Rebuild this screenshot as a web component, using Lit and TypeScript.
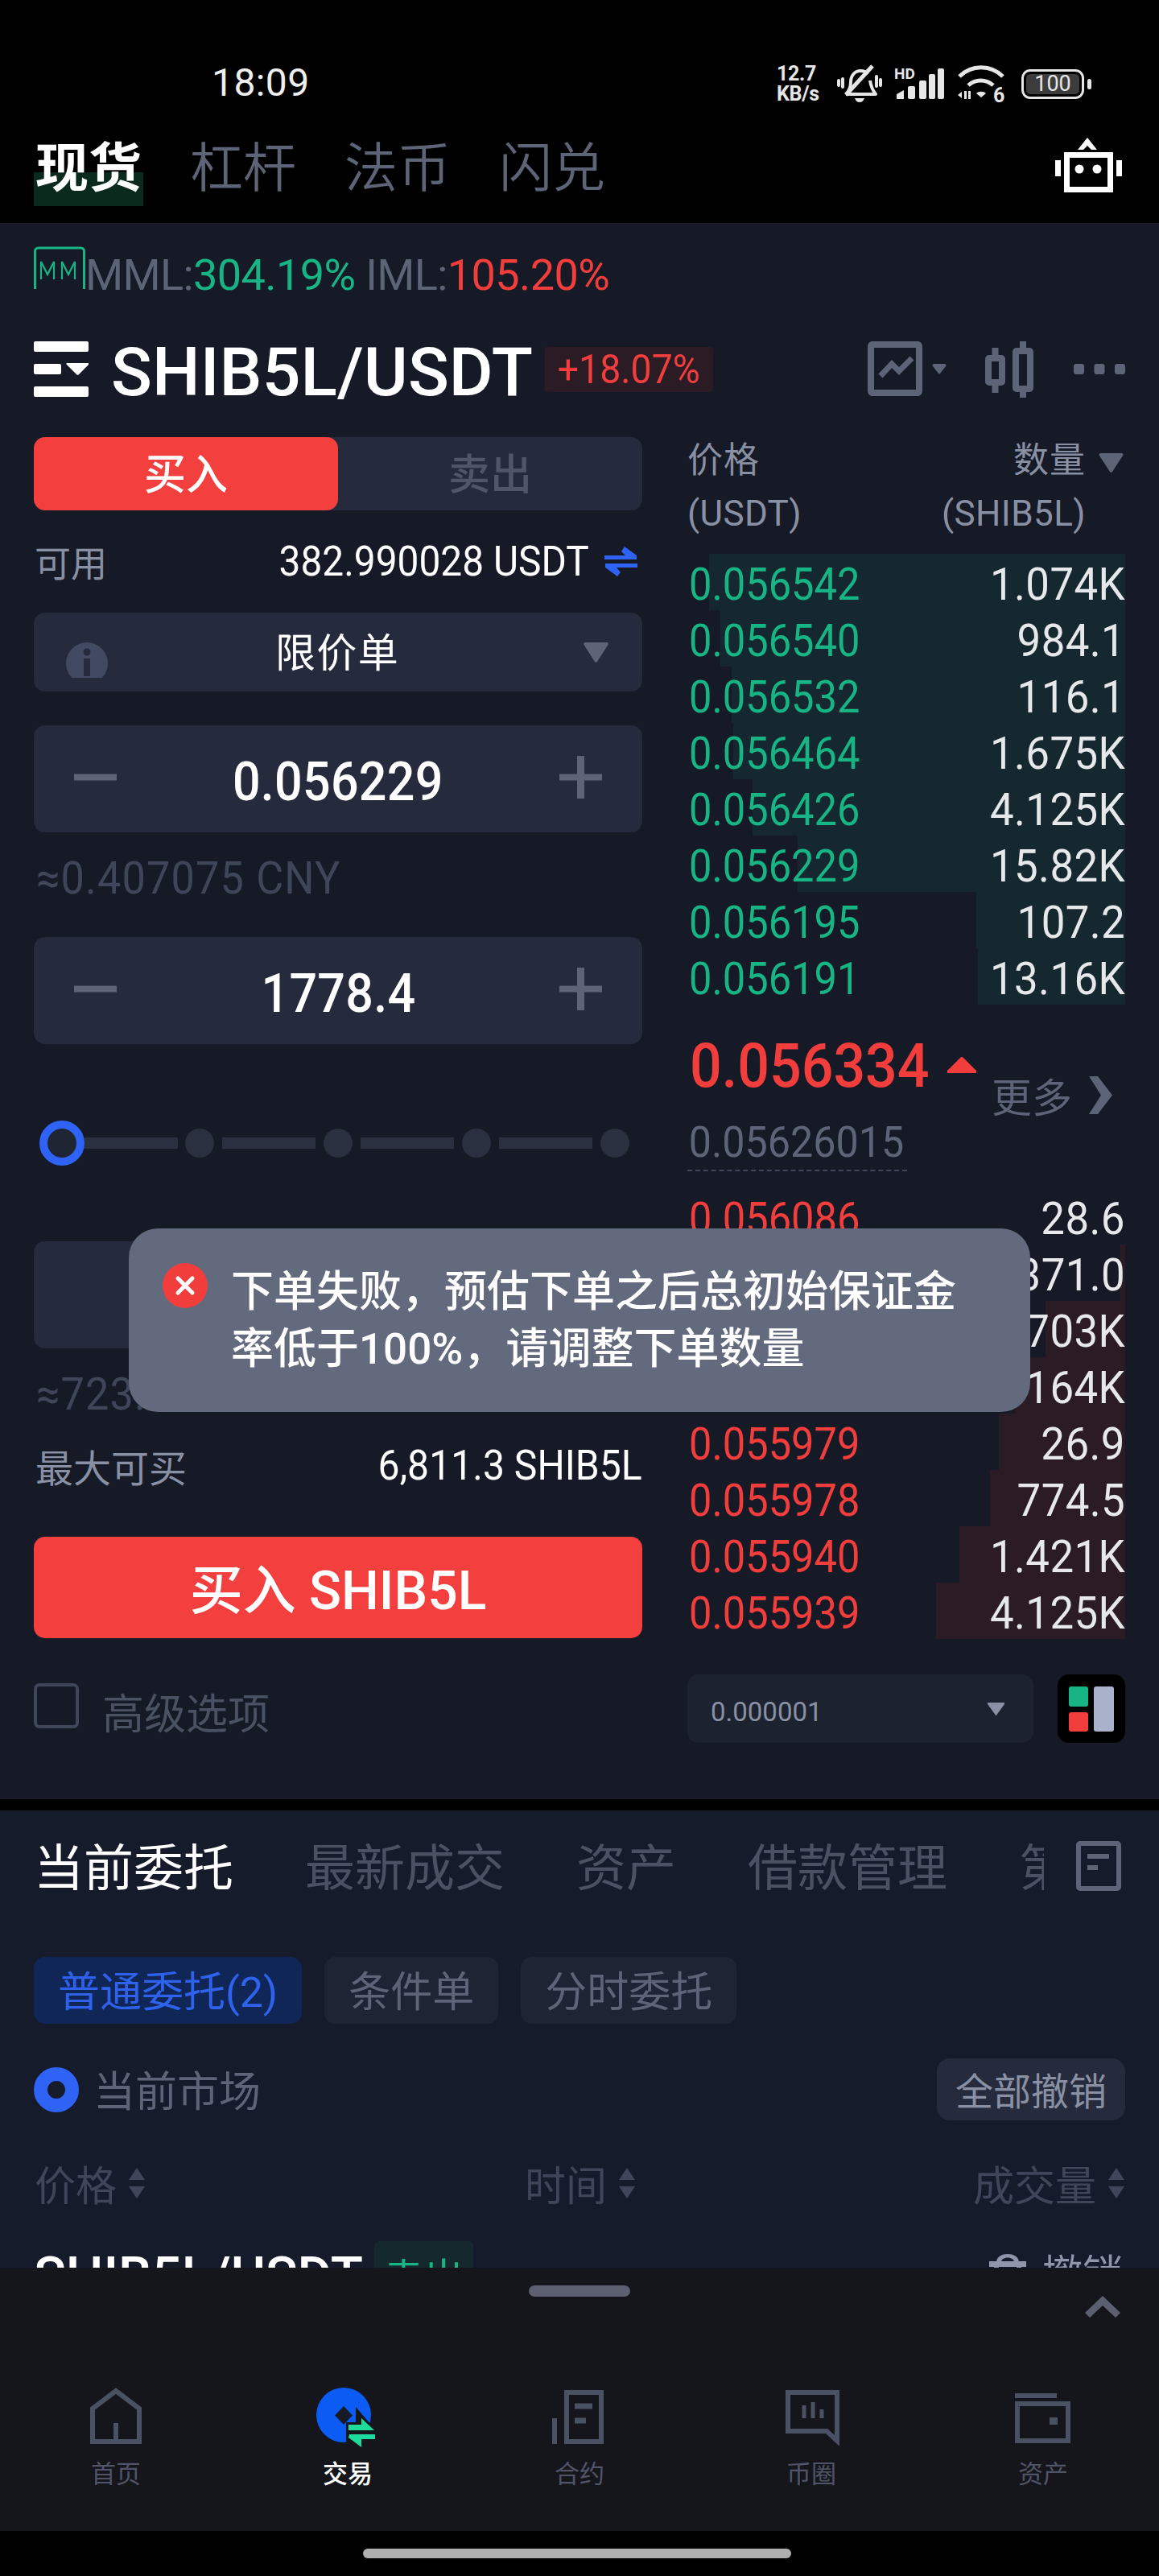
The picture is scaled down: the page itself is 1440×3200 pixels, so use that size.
import { LitElement, html, css, svg } from "lit";
import { customElement } from "lit/decorators.js";

const asks = [
  ["0.056542", "1.074K", 881], ["0.056540", "984.1", 895], ["0.056532", "116.1", 909], ["0.056464", "1.675K", 911],
  ["0.056426", "4.125K", 935], ["0.056229", "15.82K", 991], ["0.056195", "107.2", 1213], ["0.056191", "13.16K", 1215],
] as const;
const bids = [
  ["0.056086", "28.6", 1398], ["0.056071", "371.0", 1392], ["0.056033", "1.703K", 1299], ["0.056006", "1.164K", 1262],
  ["0.055979", "26.9", 1241], ["0.055978", "774.5", 1230], ["0.055940", "1.421K", 1192], ["0.055939", "4.125K", 1163],
] as const;

const X0 = 856, X1 = 1398;
const bar = (left: number) => `width:${((X1 - left) / (X1 - X0)) * 100}%`;

const sort = svg`<svg class="sort" viewBox="0 0 22 38" width="22" height="38"><path d="M11 0 L21 15 H1Z M11 38 L21 23 H1Z" fill="#3f4659"/></svg>`;
const minus = html`<svg width="53" height="53" viewBox="0 0 53 53"><rect y="22.500" width="53" height="8" fill="#5d6477"/></svg>`;
const plus = html`<svg width="53" height="53" viewBox="0 0 53 53"><path d="M0 22.500h22V0h9v22.500h22v8H31V53h-9V30.500H0z" fill="#5d6477"/></svg>`;

@customElement("app-root")
export class AppRoot extends LitElement {
  static styles = css`
    :host { display: block; width: 1440px; height: 3200px; position: relative; overflow: hidden; background: #000;
      font-family: Roboto, "Noto Sans CJK SC", sans-serif; color: #fff; }
    svg { display: block; flex: none; }
    .top { height: 277px; background: #000; }
    .status { height: 152px; display: flex; align-items: center; padding: 56px 0 0 263px; box-sizing: border-box; position: relative; }
    .time { font-size: 48px; width: 702px; margin-top: -4px; color: #eee; letter-spacing: 0.4px; }
    .cluster { display: flex; align-items: center; }
    .speed { width: 60px; font-size: 25px; line-height: 25px; font-weight: 700; margin-right: 15px; color: #e6e6e6; letter-spacing: -0.3px; }
    .batt { margin-left: 18px; width: 87px; display: flex; align-items: center; gap: 4px; }
    .batt .shell { width: 78px; height: 37px; box-sizing: border-box; border: 3.5px solid #e6e6e6; border-radius: 11px; padding: 3px; }
    .batt .fill { background: #3c3c3c; border-radius: 5px; height: 100%; font-size: 27px; line-height: 24px; text-align: center; color: #e6e6e6; }
    .batt .nub { width: 5px; height: 13px; border-radius: 3px; background: #e6e6e6; }
    .tabs { display: flex; align-items: center; height: 104px; padding: 0 0 0 44px; gap: 60px; margin-top: 6px; }
    .tab { font-size: 66px; line-height: 88px; color: #5d6477; position: relative; font-weight: 350; }
    .tab.on { color: #fff; font-weight: 700; z-index: 0; }
    .tab.on::before { content: ""; position: absolute; z-index: -1; left: -2px; right: -2px; top: 48px; height: 42px; background: #0a2a1d; }
    .robot { position: absolute; left: 1306px; top: 166px; }

    .main { height: 1958px; background: #161a26; }
    .margin { height: 128px; padding-left: 42px; display: flex; align-items: center; font-size: 54px; letter-spacing: -0.6px; color: #5d6477; white-space: pre; }
    .margin svg { margin-top: -16px; }
    .g { color: #17b585; } .r { color: #f23d3d; }
    .pair { height: 70px; padding: 19px 42px 49px; display: flex; align-items: center; }
    .pair .name { font-size: 84px; font-weight: 500; margin: 8px 15px 0 28px; letter-spacing: 0.1px; line-height: 70px; }
    .chg { background: #2a1b25; color: #f23d3d; height: 56px; width: 209px; display: flex; align-items: center; justify-content: center; font-size: 50px; border-radius: 4px; }
    .chg span { transform: scaleX(.93); }
    .tools { margin-left: auto; display: flex; align-items: center; }
    .cols { display: grid; grid-template-columns: 756px 542px; column-gap: 58px; padding: 0 42px; }

    .seg { display: flex; height: 91px; background: #252b3d; border-radius: 14px; font-size: 52px; }
    .seg div { flex: 1; display: flex; align-items: center; justify-content: center; color: #4f566a; font-weight: 500; padding-bottom: 6px; box-sizing: border-box; }
    .seg div:first-child { flex: none; width: 378px; background: #f43f3f; border-radius: 14px; color: #fff; }
    .avail { height: 127px; display: flex; align-items: center; justify-content: space-between; font-size: 45px; color: #8a90a3; padding: 0 6px 0 1px; }
    .avail .v { display: flex; align-items: center; gap: 19px; color: #fff; font-size: 52px; }
    .avail .v span { transform: scaleX(.92); transform-origin: right center; }
    .box { background: #252b3d; border-radius: 14px; display: flex; align-items: center; justify-content: space-between; box-sizing: border-box; }
    .otype { height: 98px; padding: 0 42px 0 40px; font-size: 50px; display: grid; grid-template-columns: 1fr auto 1fr; }
    .otype span { letter-spacing: 1.4px; margin-top: -6px; }
    .otype svg:last-child { justify-self: end; }
    .num { height: 133px; padding: 0 50px; font-size: 67px; font-weight: 500; letter-spacing: 0.3px; }
    .num span { margin-top: 6px; transform: scaleX(.91); }
    .num svg { margin-top: -4px; }
    .cny { height: 130px; padding: 0 0 16px 3px; box-sizing: border-box; display: flex; align-items: center; font-size: 55px; color: #3f4659; letter-spacing: 1.200px; }
    .cny span, .note span { transform: scaleX(.95); transform-origin: left center; white-space: nowrap; }
    .mt42 { margin-top: 42px; }
    .slider { margin: 95px 17px 94px 7px; height: 56px; display: flex; align-items: center; }
    .ring { width: 56px; height: 56px; box-sizing: border-box; border: 10px solid #2e63f5; background: #1f2533; border-radius: 50%; flex: none; }
    .dot { width: 36px; height: 36px; background: #2b3040; border-radius: 50%; flex: none; }
    .line { width: 116px; flex: none; height: 14px; background: #2b3040; margin: 0 10px; }
    .line.first { margin: 0 9px 0 0; }
    .amt { height: 133px; }
    .note { height: 114px; display: flex; align-items: center; font-size: 55px; color: #3f4659; padding-left: 3px; letter-spacing: 1.200px; }
    .max { height: 66px; display: flex; align-items: center; justify-content: space-between; font-size: 47px; color: #8a90a3; padding-left: 2px; margin-top: -2px; margin-bottom: 2px; }
    .max b { font-weight: 400; color: #fff; font-size: 52px; transform: scaleX(.925); transform-origin: right center; white-space: nowrap; }
    .buy { margin-top: 56px; height: 126px; border-radius: 14px; background: #f43f3f; display: flex; align-items: center; justify-content: center; font-size: 66px; font-weight: 500; padding-bottom: 4px; box-sizing: border-box; }
    .adv { margin-top: 56px; display: flex; font-size: 52px; color: #4a5163; }
    .chk { width: 56px; height: 56px; box-sizing: border-box; border: 4px solid #3f4659; border-radius: 7px; margin-right: 29px; }
    .adv span { margin-top: 10px; line-height: 60px; }

    .hd { display: flex; justify-content: space-between; font-size: 44px; color: #8a90a3; padding-right: 49px; margin-bottom: 13px; margin-left: -2px; position: relative; }
    .hd .a { height: 58px; line-height: 58px; letter-spacing: 1px; } .hd .b { height: 74px; line-height: 74px; letter-spacing: 0.4px; }
    .hd .r2 { text-align: right; }
    .hd svg { position: absolute; right: 2px; top: 20px; }
    .row { height: 70px; display: flex; justify-content: space-between; align-items: center; font-size: 55px; position: relative; color: #e6e8ec; z-index: 0; box-sizing: border-box; padding-top: 5px; }
    .row span { display: block; white-space: nowrap; }
    .row .p { transform: scaleX(.92); transform-origin: left center; }
    .row .q { transform: scaleX(.96); transform-origin: right center; letter-spacing: 0.4px; }
    .row i { position: absolute; right: 0; top: 0; bottom: 0; z-index: -1; }
    .asks .p { color: #17b585; } .asks i { background: #16282f; }
    .bids .p { color: #f23d3d; } .bids i { background: #2b1b25; }
    .last { height: 206px; display: flex; justify-content: space-between; margin-bottom: 22px; }
    .lp { height: 148px; box-sizing: border-box; padding: 4px 0 0 1px; display: flex; align-items: center; font-size: 76px; font-weight: 500; color: #f23d3d; }
    .lp span { transform: scaleX(.92); transform-origin: left center; }
    .lp svg { margin-top: -2px; margin-left: -3px; }
    .mp { width: 273px; font-size: 54px; color: #5d6477; height: 46px; line-height: 46px; padding-bottom: 11px; border-bottom: 2px dashed #3f4659; margin-left: -2px; white-space: nowrap; }
    .mp span { display: block; padding-left: 2px; transform: scaleX(.93); transform-origin: left center; }
    .more { padding-top: 82px; height: 60px; display: flex; align-items: center; gap: 21px; font-size: 50px; color: #5d6477; padding-right: 16px; flex: none; white-space: nowrap; }
    .tb { margin: 44px 0 0 -2px; display: flex; gap: 30px; height: 85px; }
    .dd { width: 430px; background: #1d2230; border-radius: 14px; display: flex; align-items: center; justify-content: space-between; padding: 0 36px 0 29px; box-sizing: border-box; color: #8a90a3; font-size: 33px; }
    .dd span { margin-top: 8px; }
    .lay { width: 84px; height: 85px; background: #000; border-radius: 14px; display: flex; align-items: center; justify-content: center; }

    .sep { height: 14px; background: #000; }
    .orders { height: 568px; background: #161b2b; overflow: hidden; }
    .otabs { height: 138px; display: flex; align-items: center; padding-left: 42px; }
    .otrack { width: 1255px; display: flex; gap: 89px; overflow: hidden; white-space: nowrap; font-size: 62px; color: #4a5163; flex: none; margin-top: -4px; }
    .otrack .on { color: #fff; }
    .otabs svg { margin-left: 40px; }
    .sub { margin-top: 44px; display: flex; gap: 28px; padding-left: 42px; }
    .sub div { height: 83px; padding: 0 30px 4px; box-sizing: border-box; background: #1e2433; border-radius: 14px; display: flex; align-items: center; font-size: 52px; color: #5d6477; }
    .sub div.on { background: #0f2657; color: #2f62ec; }
    .flt { margin-top: 43px; height: 77px; display: flex; align-items: center; padding: 0 42px; font-size: 52px; color: #5d6477; }
    .radio { width: 56px; height: 56px; box-sizing: border-box; border: 17px solid #2e63f5; border-radius: 50%; margin-right: 18px; }
    .flt > span { margin-top: -2px; }
    .cancel { margin-left: auto; height: 77px; width: 234px; background: #252b3d; border-radius: 16px; color: #8a90a3; font-size: 47px; display: flex; align-items: center; justify-content: center; padding-bottom: 2px; box-sizing: border-box; }
    .ohead { margin-top: 41px; height: 60px; padding: 0 42px 0 43px; display: grid; grid-template-columns: 609px 1fr auto; font-size: 51px; color: #3f4659; }
    .ohead div { display: flex; align-items: center; gap: 14px; }
    .orow { margin-top: 49px; height: 84px; display: flex; align-items: center; padding: 0 45px 0 42px; }
    .orow .t { font-size: 66px; font-weight: 500; letter-spacing: -0.2px; margin-top: 4px; }
    .orow .tag { margin-left: 14px; width: 123px; height: 84px; background: #15282e; color: #17b585; border-radius: 6px; font-size: 50px; display: flex; align-items: center; justify-content: center; }
    .orow .c { margin-left: auto; margin-top: -10px; display: flex; align-items: center; gap: 20px; font-size: 50px; color: #8f95aa; }
    .orow .c svg { margin-top: 6px; }

    .sheet { height: 327px; background: #15161c; position: relative; }
    .grab { width: 126px; height: 14px; border-radius: 7px; background: #5d6070; margin: 0 auto; position: relative; top: 22px; }
    .chev { height: 129px; display: flex; justify-content: flex-end; padding: 21px 48px 0 0; box-sizing: border-box; }
    .nav { display: grid; grid-template-columns: repeat(5, 288px); }
    .nav div { display: flex; flex-direction: column; align-items: center; font-size: 31px; color: #4f5566; }
    .nav div.on { color: #fff; font-weight: 500; }
    .nav span { margin-top: 14px; line-height: 40px; }
    .gest { height: 56px; background: #000; padding-top: 22px; box-sizing: border-box; }
    .gest div { width: 532px; height: 12px; border-radius: 6px; background: #b0b0b0; margin-left: 451px; }

    .toast { position: absolute; left: 160px; top: 1526px; width: 1120px; height: 228px; background: #636a7e; border-radius: 36px; box-sizing: border-box; padding: 44px 70px 0 127px; font-size: 53px; line-height: 71px; font-weight: 500; }
    .toast svg { position: absolute; left: 42px; top: 43px; }
  `;

  render() {
    const row = (r: readonly [string, string, number]) =>
      html`<div class="row"><i style=${bar(r[2])}></i><span class="p">${r[0]}</span><span class="q">${r[1]}</span></div>`;
    return html`
      <div class="top">
        <div class="status">
          <div class="time">18:09</div>
          <div class="cluster">
            <div class="speed">12.7<br />KB/s</div>
            <svg width="56" height="48" viewBox="0 0 56 48" fill="none" stroke="#e6e6e6" stroke-width="4">
              <path d="M11 37c4-4 6-8 6-15 0-8 5-14 12-14 4 0 7 1 9 4M41 20c1 7 3 12 7 17H11" stroke-linejoin="round"/>
              <path d="M44 2 11 38" stroke-width="5"/>
              <path d="M7 18v10M2 20v6M49 15v12M54 19v7" stroke-linecap="round"/>
              <path d="M22 42h12c-1 3-3 5-6 5s-5-2-6-5z" fill="#e6e6e6" stroke="none"/>
            </svg>
            <svg style="margin-left:15px" width="63" height="42" viewBox="0 0 63 42">
              <text x="0" y="15" font-family="Roboto" font-weight="700" font-size="19" fill="#e6e6e6">HD</text>
              <g fill="#e6e6e6"><path d="M3 34l9-5v11H3z"/><rect x="17" y="24" width="9" height="16" rx="2"/><rect x="31" y="17" width="9" height="23" rx="2"/><rect x="43" y="9" width="8" height="31" rx="2"/><rect x="54" y="2" width="8" height="38" rx="2"/></g>
            </svg>
            <svg style="margin-left:15px" width="62" height="48" viewBox="0 0 62 48" fill="none" stroke="#e6e6e6" stroke-width="5">
              <path d="M3 15C18 0 42 0 57 15"/><path d="M14 26c9-8 22-8 31 0"/>
              <path d="M24 36c3-3 9-3 12 0l-6 5z" fill="#e6e6e6" stroke="none"/>
              <path d="M1 38l5-4v8zM9 33h3v10H9zM14 33h3v10h-3z" fill="#e6e6e6" stroke="none"/>
              <text x="45" y="47" font-family="Roboto" font-weight="700" font-size="25" fill="#e6e6e6" stroke="none">6</text>
            </svg>
            <div class="batt"><div class="shell"><div class="fill">100</div></div><div class="nub"></div></div>
          </div>
        </div>
        <div class="tabs">
          <div class="tab on">现货</div><div class="tab">杠杆</div><div class="tab">法币</div><div class="tab">闪兑</div>
        </div>
        <svg class="robot" width="90" height="76" viewBox="0 0 90 76" fill="#fff">
          <path d="M33 20 45 5l12 15H50l-5-5-5 5z"/>
          <rect x="19.500" y="26.500" width="54" height="43" fill="none" stroke="#fff" stroke-width="7"/>
          <circle cx="35" cy="44" r="5.500"/><circle cx="57" cy="44" r="5.500"/>
          <rect x="5" y="33" width="7" height="20"/><rect x="81" y="33" width="7" height="20"/>
        </svg>
      </div>

      <div class="main">
        <div class="margin">
          <svg width="64" height="54" viewBox="0 0 64 54" fill="none" stroke="#17b585">
            <path d="M1.500 53V6a4 4 0 0 1 4-4h53a4 4 0 0 1 4 4v47" stroke-width="3"/>
            <path d="M9 41V19l8 16 8-16v22M35 41V19l8 16 8-16v22" stroke-width="2.200"/>
          </svg>MML:<span class="g">304.19%</span> IML:<span class="r">105.20%</span>
        </div>
        <div class="pair">
          <svg width="68" height="70" viewBox="0 0 68 70" fill="#fff"><rect width="68" height="13" rx="2"/><rect y="28" width="34" height="13" rx="2"/><rect y="56" width="68" height="13" rx="2"/><path d="M42 27h25a1 1 0 0 1 1 2L56 41a2 2 0 0 1-3 0L41 29a1 1 0 0 1 1-2z"/></svg>
          <div class="name">SHIB5L/USDT</div>
          <div class="chg"><span>+18.07%</span></div>
          <div class="tools">
            <svg width="68" height="70" viewBox="0 0 68 70"><rect x="4" y="4" width="60" height="60" rx="2" fill="none" stroke="#5d6477" stroke-width="8"/><path d="M16 43l14-15 9 9 16-16" fill="none" stroke="#5d6477" stroke-width="7"/></svg>
            <svg style="margin-left:12px" width="18" height="14" viewBox="0 0 18 14"><path d="M2 0h14a2 2 0 0 1 1 3l-7 9a1.500 1.500 0 0 1-2 0L1 3a2 2 0 0 1 1-3z" fill="#5d6477"/></svg>
            <svg style="margin-left:48px;margin-right:2px" width="60" height="70" viewBox="0 0 60 70" fill="none" stroke="#5d6477" stroke-width="8">
              <rect x="4" y="21" width="17" height="30" rx="1"/><path d="M12.500 8v13M12.500 51v13"/>
              <rect x="38" y="12" width="18" height="47" rx="1"/><path d="M47 0v12M47 59v11"/>
            </svg>
            <svg style="margin-left:48px" width="64" height="14" viewBox="0 0 64 14" fill="#5d6477"><rect width="13" height="13" rx="3"/><rect x="25.500" width="13" height="13" rx="3"/><rect x="51" width="13" height="13" rx="3"/></svg>
          </div>
        </div>
        <div class="cols">
          <div>
            <div class="seg"><div>买入</div><div>卖出</div></div>
            <div class="avail"><span>可用</span><div class="v"><span>382.990028 USDT</span>
              <svg width="41" height="37" viewBox="0 0 41 37" fill="#2e63f5"><path d="M25 0l15 11v5H0v-5h26l-5-5zM1 21h40v5H15l5 6-4 5L1 26z"/></svg></div></div>
            <div class="box otype">
              <svg width="52" height="44" viewBox="0 0 52 44" style="margin-top:20px"><path d="M7.200 44A26 26 0 1 1 44.800 44Z" fill="#414a61"/><circle cx="26" cy="12" r="4.500" fill="#252b3d"/><rect x="22" y="20" width="8" height="22" fill="#252b3d"/></svg>
              <span>限价单</span>
              <svg width="31" height="25" viewBox="0 0 31 25"><path d="M2 0h27a2 2 0 0 1 1.500 3L17 24a2 2 0 0 1-3 0L.5 3A2 2 0 0 1 2 0z" fill="#5d6477"/></svg>
            </div>
            <div class="box num mt42">${minus}<span>0.056229</span>${plus}</div>
            <div class="cny"><span>≈0.407075 CNY</span></div>
            <div class="box num">${minus}<span>1778.4</span>${plus}</div>
            <div class="slider">
              <div class="ring"></div><div class="line first"></div><div class="dot"></div><div class="line"></div><div class="dot"></div><div class="line"></div><div class="dot"></div><div class="line"></div><div class="dot"></div>
            </div>
            <div class="box amt"></div>
            <div class="note"><span>≈723.45 CNY</span></div>
            <div class="max"><span>最大可买</span><b>6,811.3 SHIB5L</b></div>
            <div class="buy">买入 SHIB5L</div>
            <div class="adv"><div class="chk"></div><span>高级选项</span></div>
          </div>
          <div>
            <div class="hd">
              <div><div class="a">价格</div><div class="b">(USDT)</div></div>
              <div class="r2"><div class="a">数量</div><div class="b">(SHIB5L)</div></div>
              <svg width="31" height="24" viewBox="0 0 31 24"><path d="M2 0h27a2 2 0 0 1 1 3L17 23a2 2 0 0 1-3 0L1 3a2 2 0 0 1 1-3z" fill="#5d6477"/></svg>
            </div>
            <div class="asks">${asks.map(row)}</div>
            <div class="last">
              <div>
                <div class="lp"><span>0.056334</span><svg width="36" height="20" viewBox="0 0 36 20"><path d="M16 1a3 3 0 0 1 4 0l15 15a2 2 0 0 1-1 4H2a2 2 0 0 1-1-4z" fill="#f23d3d"/></svg></div>
                <div class="mp"><span>0.05626015</span></div>
              </div>
              <div class="more">更多<svg width="29" height="47" viewBox="0 0 29 47"><path d="M0 0h11l18 23.500L11 47H0l15-23.500z" fill="#5d6477"/></svg></div>
            </div>
            <div class="bids">${bids.map(row)}</div>
            <div class="tb">
              <div class="dd"><span>0.000001</span><svg width="21" height="16" viewBox="0 0 21 16"><path d="M1 0h19a1 1 0 0 1 1 2L11.500 15a1 1 0 0 1-2 0L0 2a1 1 0 0 1 1-2z" fill="#8a90a3"/></svg></div>
              <div class="lay"><svg width="56" height="56" viewBox="0 0 56 56"><rect width="24" height="25" rx="3" fill="#17b585"/><rect y="32" width="24" height="24" rx="3" fill="#f23d3d"/><rect x="31" width="25" height="56" rx="3" fill="#aab2cb"/></svg></div>
            </div>
          </div>
        </div>
      </div>

      <div class="sep"></div>

      <div class="orders">
        <div class="otabs">
          <div class="otrack"><span class="on">当前委托</span><span>最新成交</span><span>资产</span><span>借款管理</span><span>第三方</span></div>
          <svg width="56" height="62" viewBox="0 0 56 62" fill="none" stroke="#5d6477" stroke-width="6"><rect x="3" y="3" width="50" height="56" rx="2"/><path d="M14 19h27M14 33h13"/></svg>
        </div>
        <div class="sub"><div class="on">普通委托(2)</div><div>条件单</div><div>分时委托</div></div>
        <div class="flt"><div class="radio"></div><span>当前市场</span><div class="cancel">全部撤销</div></div>
        <div class="ohead"><div>价格${sort}</div><div>时间${sort}</div><div>成交量${sort}</div></div>
        <div class="orow"><span class="t">SHIB5L/USDT</span><span class="tag">卖出</span>
          <span class="c"><svg width="46" height="48" viewBox="0 0 46 48" fill="#8f95aa"><path d="M9 9C11-3 35-3 37 9h-6C29 3 17 3 15 9z"/><rect y="9" width="46" height="7"/><rect x="6" y="16" width="6" height="32"/><rect x="34" y="16" width="6" height="32"/></svg>撤销</span></div>
      </div>

      <div class="sheet">
        <div class="grab"></div>
        <div class="chev"><svg width="44" height="27" viewBox="0 0 44 27"><path d="M22 0l22 21-6 6-16-15L6 27l-6-6z" fill="#5a6070"/></svg></div>
        <div class="nav">
          <div><svg width="80" height="80" viewBox="0 0 80 80" fill="none" stroke="#4a5163" stroke-width="6"><path d="M11 73V32L40 10l29 22v41zM40 50v23"/></svg><span>首页</span></div>
          <div class="on"><svg width="80" height="80" viewBox="0 0 80 80"><circle cx="35" cy="40" r="34" fill="#0b5cf5"/><path d="M35 29l11 11.500L35 52 24 40.500z" fill="#161a26"/><path d="M38 79V49h12V30l26 30v19z" fill="#15161c"/><path d="M41 52h16v-8l16 15H41zM42 64h32v6H57v10L41 68z" fill="#1fdb9b"/></svg><span>交易</span></div>
          <div><svg width="80" height="80" viewBox="0 0 80 80" fill="none" stroke="#4a5163" stroke-width="6"><path d="M24 12h43v61H24z"/><path d="M9 44v32"/><path d="M34 29h22M34 47h14" stroke-width="7"/></svg><span>合约</span></div>
          <div><svg width="80" height="80" viewBox="0 0 80 80" fill="none" stroke="#4a5163" stroke-width="6"><path d="M11 12h61v60L59 60H11z"/><path d="M31 28v16M42 24v20M53 33v11" stroke-width="5"/></svg><span>币圈</span></div>
          <div><svg width="80" height="80" viewBox="0 0 80 80" fill="#4a5163"><rect x="5" y="13" width="52" height="6"/><rect x="8" y="26" width="63" height="46" fill="none" stroke="#4a5163" stroke-width="6"/><rect x="48" y="43" width="10" height="9"/></svg><span>资产</span></div>
        </div>
      </div>
      <div class="gest"><div></div></div>

      <div class="toast">
        <svg width="56" height="56" viewBox="0 0 56 56"><circle cx="28" cy="28" r="28" fill="#f23d3d"/><path d="M19 19l18 18M37 19 19 37" stroke="#fff" stroke-width="5" stroke-linecap="round"/></svg>
        下单失败，预估下单之后总初始保证金<br />率低于100%，请调整下单数量
      </div>
    `;
  }
}
